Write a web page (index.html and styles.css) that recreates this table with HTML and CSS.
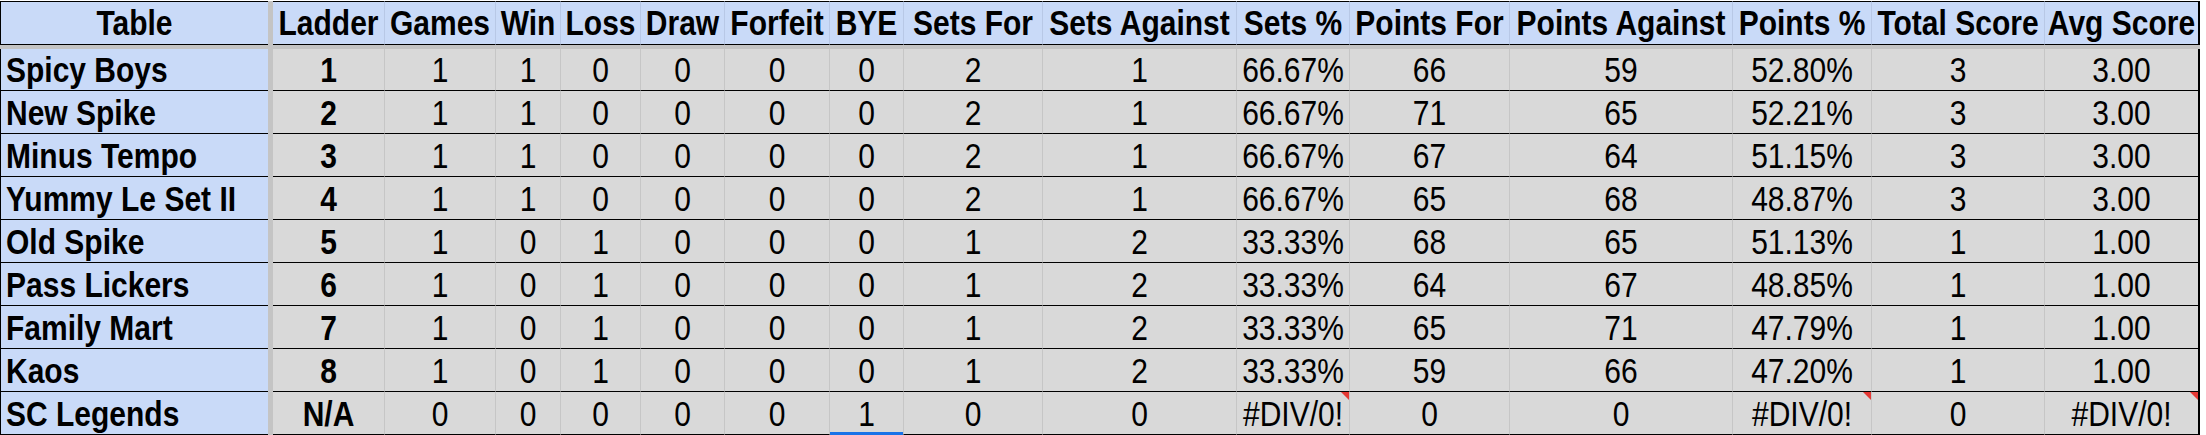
FILE: index.html
```html
<!DOCTYPE html>
<html>
<head>
<meta charset="utf-8">
<link rel="stylesheet" href="styles.css">
</head>
<body>
<div class="sheet">
  <div class="row head">
    <div class="c name hcenter"><span>Table</span></div><div class="sep"></div>
    <div class="c"><span>Ladder</span></div><div class="c"><span>Games</span></div><div class="c"><span>Win</span></div><div class="c"><span>Loss</span></div><div class="c"><span>Draw</span></div><div class="c"><span>Forfeit</span></div><div class="c"><span>BYE</span></div><div class="c"><span>Sets For</span></div><div class="c"><span>Sets Against</span></div><div class="c"><span>Sets %</span></div><div class="c"><span>Points For</span></div><div class="c"><span>Points Against</span></div><div class="c"><span>Points %</span></div><div class="c"><span>Total Score</span></div><div class="c last"><span>Avg Score</span></div>
  </div>
  <div class="hsep"></div>
  <div class="row data first">
    <div class="c name"><span>Spicy Boys</span></div><div class="sep"></div>
    <div class="c b"><span>1</span></div><div class="c"><span>1</span></div><div class="c"><span>1</span></div><div class="c"><span>0</span></div><div class="c"><span>0</span></div><div class="c"><span>0</span></div><div class="c"><span>0</span></div><div class="c"><span>2</span></div><div class="c"><span>1</span></div><div class="c"><span>66.67%</span></div><div class="c"><span>66</span></div><div class="c"><span>59</span></div><div class="c"><span>52.80%</span></div><div class="c"><span>3</span></div><div class="c last"><span>3.00</span></div>
  </div>
  <div class="row data">
    <div class="c name"><span>New Spike</span></div><div class="sep"></div>
    <div class="c b"><span>2</span></div><div class="c"><span>1</span></div><div class="c"><span>1</span></div><div class="c"><span>0</span></div><div class="c"><span>0</span></div><div class="c"><span>0</span></div><div class="c"><span>0</span></div><div class="c"><span>2</span></div><div class="c"><span>1</span></div><div class="c"><span>66.67%</span></div><div class="c"><span>71</span></div><div class="c"><span>65</span></div><div class="c"><span>52.21%</span></div><div class="c"><span>3</span></div><div class="c last"><span>3.00</span></div>
  </div>
  <div class="row data">
    <div class="c name"><span>Minus Tempo</span></div><div class="sep"></div>
    <div class="c b"><span>3</span></div><div class="c"><span>1</span></div><div class="c"><span>1</span></div><div class="c"><span>0</span></div><div class="c"><span>0</span></div><div class="c"><span>0</span></div><div class="c"><span>0</span></div><div class="c"><span>2</span></div><div class="c"><span>1</span></div><div class="c"><span>66.67%</span></div><div class="c"><span>67</span></div><div class="c"><span>64</span></div><div class="c"><span>51.15%</span></div><div class="c"><span>3</span></div><div class="c last"><span>3.00</span></div>
  </div>
  <div class="row data">
    <div class="c name"><span>Yummy Le Set II</span></div><div class="sep"></div>
    <div class="c b"><span>4</span></div><div class="c"><span>1</span></div><div class="c"><span>1</span></div><div class="c"><span>0</span></div><div class="c"><span>0</span></div><div class="c"><span>0</span></div><div class="c"><span>0</span></div><div class="c"><span>2</span></div><div class="c"><span>1</span></div><div class="c"><span>66.67%</span></div><div class="c"><span>65</span></div><div class="c"><span>68</span></div><div class="c"><span>48.87%</span></div><div class="c"><span>3</span></div><div class="c last"><span>3.00</span></div>
  </div>
  <div class="row data">
    <div class="c name"><span>Old Spike</span></div><div class="sep"></div>
    <div class="c b"><span>5</span></div><div class="c"><span>1</span></div><div class="c"><span>0</span></div><div class="c"><span>1</span></div><div class="c"><span>0</span></div><div class="c"><span>0</span></div><div class="c"><span>0</span></div><div class="c"><span>1</span></div><div class="c"><span>2</span></div><div class="c"><span>33.33%</span></div><div class="c"><span>68</span></div><div class="c"><span>65</span></div><div class="c"><span>51.13%</span></div><div class="c"><span>1</span></div><div class="c last"><span>1.00</span></div>
  </div>
  <div class="row data">
    <div class="c name"><span>Pass Lickers</span></div><div class="sep"></div>
    <div class="c b"><span>6</span></div><div class="c"><span>1</span></div><div class="c"><span>0</span></div><div class="c"><span>1</span></div><div class="c"><span>0</span></div><div class="c"><span>0</span></div><div class="c"><span>0</span></div><div class="c"><span>1</span></div><div class="c"><span>2</span></div><div class="c"><span>33.33%</span></div><div class="c"><span>64</span></div><div class="c"><span>67</span></div><div class="c"><span>48.85%</span></div><div class="c"><span>1</span></div><div class="c last"><span>1.00</span></div>
  </div>
  <div class="row data">
    <div class="c name"><span>Family Mart</span></div><div class="sep"></div>
    <div class="c b"><span>7</span></div><div class="c"><span>1</span></div><div class="c"><span>0</span></div><div class="c"><span>1</span></div><div class="c"><span>0</span></div><div class="c"><span>0</span></div><div class="c"><span>0</span></div><div class="c"><span>1</span></div><div class="c"><span>2</span></div><div class="c"><span>33.33%</span></div><div class="c"><span>65</span></div><div class="c"><span>71</span></div><div class="c"><span>47.79%</span></div><div class="c"><span>1</span></div><div class="c last"><span>1.00</span></div>
  </div>
  <div class="row data">
    <div class="c name"><span>Kaos</span></div><div class="sep"></div>
    <div class="c b"><span>8</span></div><div class="c"><span>1</span></div><div class="c"><span>0</span></div><div class="c"><span>1</span></div><div class="c"><span>0</span></div><div class="c"><span>0</span></div><div class="c"><span>0</span></div><div class="c"><span>1</span></div><div class="c"><span>2</span></div><div class="c"><span>33.33%</span></div><div class="c"><span>59</span></div><div class="c"><span>66</span></div><div class="c"><span>47.20%</span></div><div class="c"><span>1</span></div><div class="c last"><span>1.00</span></div>
  </div>
  <div class="row data">
    <div class="c name"><span>SC Legends</span></div><div class="sep"></div>
    <div class="c b"><span>N/A</span></div><div class="c"><span>0</span></div><div class="c"><span>0</span></div><div class="c"><span>0</span></div><div class="c"><span>0</span></div><div class="c"><span>0</span></div><div class="c sel"><span>1</span></div><div class="c"><span>0</span></div><div class="c"><span>0</span></div><div class="c flag"><span>#DIV/0!</span></div><div class="c"><span>0</span></div><div class="c"><span>0</span></div><div class="c flag"><span>#DIV/0!</span></div><div class="c"><span>0</span></div><div class="c last flag"><span>#DIV/0!</span></div>
  </div>
</div>
</body>
</html>
```

FILE: styles.css
```css
html, body {
  margin: 0;
  padding: 0;
  background: #ffffff;
}

body {
  width: 2206px;
  height: 435px;
  overflow: hidden;
  font-family: "Liberation Sans", Arial, sans-serif;
  font-size: 30px;
  color: #000;
}

.sheet {
  width: 2200px;
  padding-top: 1px;
}

.row {
  display: grid;
  grid-template-columns: 268px 5px 112px 111px 65px 80px 84px 105px 74px 139px 194px 113px 160px 223px 139px 173px 155px;
  height: 43px;
}

.row.head {
  height: 44px;
}

.row.first {
  height: 42px;
}

.c {
  position: relative;
  box-sizing: border-box;
  display: flex;
  align-items: flex-end;
  justify-content: center;
  white-space: nowrap;
  line-height: normal;
  padding-bottom: 1px;
  border-bottom: 1px solid #000;
  border-right: 1px solid #c6c6c6;
  background: #d9d9d9;
}

.c span {
  display: inline-block;
  transform: scaleY(1.16);
  transform-origin: 50% 79%;
}

.sep {
  background: #c4c4c4;
}

.head .c {
  background: #c9daf8;
  font-weight: bold;
  border-top: 1px solid #000;
  border-right-color: #b8c8e6;
  padding-bottom: 2px;
}

.c.name {
  background: #c9daf8;
  font-weight: bold;
  justify-content: flex-start;
  padding-left: 5px;
  border-left: 1px solid #000;
  border-right: none;
}

.c.name.hcenter {
  justify-content: center;
  padding-left: 0;
}

.c.b {
  font-weight: bold;
}

.c.last {
  border-right: 2px solid #000;
}

.head .c.last {
  border-right: 2px solid #000;
}

.hsep {
  height: 4px;
  background: #c4c4c4;
}

.c.flag::after {
  content: "";
  position: absolute;
  top: 0;
  right: 0;
  width: 0;
  height: 0;
  border-top: 8px solid #e53935;
  border-left: 8px solid transparent;
}

.c.sel::before {
  content: "";
  position: absolute;
  left: 0;
  right: 0;
  bottom: -1px;
  height: 3px;
  background: #1a73e8;
}
```
